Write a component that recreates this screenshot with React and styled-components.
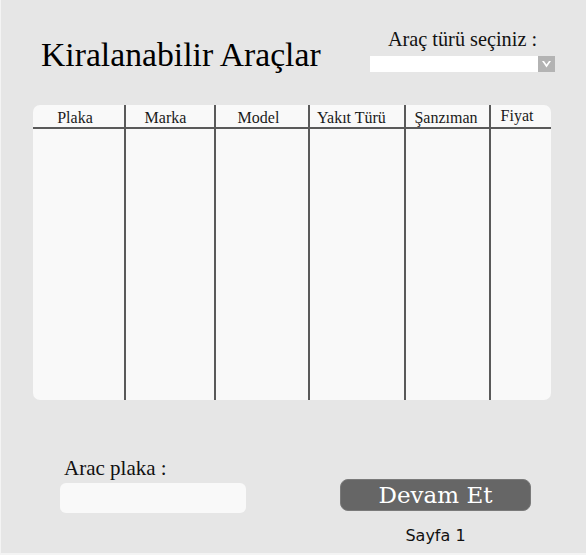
import React from "react";
import styled, { createGlobalStyle } from "styled-components";

const Global = createGlobalStyle`
  html, body { margin: 0; padding: 0; background: #f4f4f4; }
  #root { width: 586px; height: 555px; }
`;

const Frame = styled.div`
  box-sizing: border-box;
  width: 585px;
  height: 553px;
  margin-left: 1px;
  background: #e6e6e6;
  display: flex;
  flex-direction: column;
  font-family: "Liberation Serif", "Times New Roman", serif;
  color: #000;
`;

const Header = styled.div`
  display: flex;
  justify-content: space-between;
  align-items: flex-start;
  padding: 29px 31px 0 40px;
`;

const Title = styled.h1`
  margin: 6px 0 0 0;
  font-weight: normal;
  font-size: 33.7px;
  line-height: 40px;
`;

const Picker = styled.div`
  display: flex;
  flex-direction: column;
  align-items: center;
  gap: 7px;
`;

const PickerLabel = styled.div`
  font-size: 20.3px;
  line-height: 20px;
  color: #111;
`;

const Select = styled.div`
  display: flex;
  width: 185px;
  height: 16px;
  background: #ffffff;
  justify-content: flex-end;
`;

const ArrowBox = styled.div`
  width: 17px;
  height: 16px;
  background: #b3b3b3;
  display: flex;
  align-items: center;
  justify-content: center;
`;

const Table = styled.div`
  margin: 30px 0 0 32px;
  width: 518px;
  height: 295px;
  background: #f9f9f9;
  border-radius: 7px;
  display: grid;
  grid-template-columns: 92px 90px 94px 96px 85px 1fr;
  overflow: hidden;
`;

const Column = styled.div`
  display: flex;
  flex-direction: column;
  border-left: ${(p) => (p.$first ? "none" : "2px solid #5a5a5a")};
  margin-left: ${(p) => (p.$first ? "0" : "-1px")};
`;

const HeadCell = styled.div`
  box-sizing: border-box;
  height: 24px;
  border-bottom: 2px solid #5a5a5a;
  font-size: 16px;
  line-height: 16px;
  padding-top: ${(p) => p.$top}px;
  text-align: center;
  padding-right: ${(p) => p.$shift}px;
  color: #1a1a1a;
`;

const Bottom = styled.div`
  display: flex;
  align-items: flex-start;
  gap: 94px;
  padding-left: 59px;
  margin-top: 56px;
`;

const Field = styled.div`
  display: flex;
  flex-direction: column;
  gap: 3px;
`;

const FieldLabel = styled.div`
  font-size: 21px;
  line-height: 24px;
  padding-left: 4px;
  color: #111;
`;

const Input = styled.div`
  width: 186px;
  height: 30px;
  background: #f9f9f9;
  border-radius: 6px;
`;

const Actions = styled.div`
  margin-top: 23px;
  display: flex;
  flex-direction: column;
  align-items: center;
  gap: 16px;
`;

const Button = styled.button`
  box-sizing: border-box;
  width: 191px;
  height: 32px;
  background: #666666;
  border: 1px solid #7a7a7a;
  border-radius: 8px;
  color: #ffffff;
  font-family: "DejaVu Serif", serif;
  font-size: 23px;
  line-height: 28px;
  padding: 0;
`;

const PageNo = styled.div`
  font-family: "DejaVu Sans", sans-serif;
  font-size: 16px;
  line-height: 18px;
  color: #111;
`;

const columns = [
  { label: "Plaka", shift: 8, top: 5 },
  { label: "Marka", shift: 10, top: 5 },
  { label: "Model", shift: 8, top: 5 },
  { label: "Yakıt Türü", shift: 12, top: 5 },
  { label: "Şanzıman", shift: 4, top: 5 },
  { label: "Fiyat", shift: 8, top: 3 },
];

export default function App() {
  return (
    <>
      <Global />
      <Frame>
        <Header>
          <Title>Kiralanabilir Araçlar</Title>
          <Picker>
            <PickerLabel>Araç türü seçiniz :</PickerLabel>
            <Select>
              <ArrowBox>
                <svg width="11" height="10" viewBox="0 0 11 10">
                  <path d="M1 2 L5.5 8.5 L10 2 L8 2 L5.5 5.5 L3 2 Z" fill="#ffffff" />
                </svg>
              </ArrowBox>
            </Select>
          </Picker>
        </Header>
        <Table>
          {columns.map((c, i) => (
            <Column key={c.label} $first={i === 0}>
              <HeadCell $shift={c.shift} $top={c.top}>
                {c.label}
              </HeadCell>
            </Column>
          ))}
        </Table>
        <Bottom>
          <Field>
            <FieldLabel>Arac plaka :</FieldLabel>
            <Input />
          </Field>
          <Actions>
            <Button>Devam Et</Button>
            <PageNo>Sayfa 1</PageNo>
          </Actions>
        </Bottom>
      </Frame>
    </>
  );
}
